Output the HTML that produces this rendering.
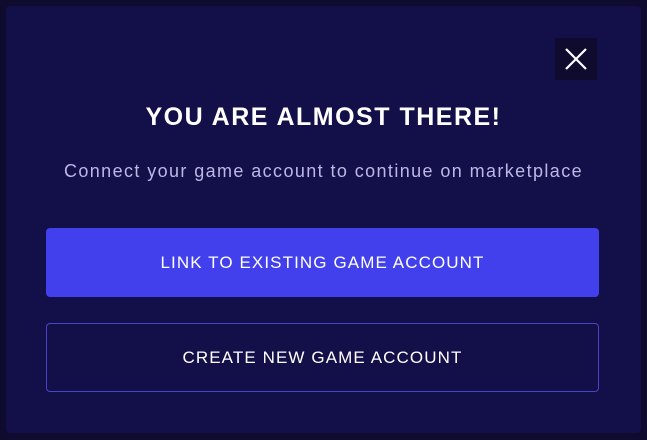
<!DOCTYPE html>
<html><head><style>
html,body{margin:0;padding:0;width:647px;height:440px;background:#0f0b2e;overflow:hidden;font-family:"Liberation Sans",sans-serif;}
.modal{position:absolute;left:6px;top:6px;width:635px;height:427px;background:#130f48;border-radius:4px;}
.close{position:absolute;left:555px;top:38px;width:42px;height:42px;background:#0e0b2f;}
.title{position:absolute;left:0;width:647px;top:103px;text-align:center;color:#fff;font-size:25px;font-weight:bold;letter-spacing:1.5px;}
.sub{position:absolute;left:0;width:647px;top:161px;text-align:center;color:#bcb8e6;font-size:18px;letter-spacing:1.4px;}
.btn{position:absolute;left:46px;width:553px;height:69px;box-sizing:border-box;border-radius:4px;color:#fff;font-size:17px;letter-spacing:1.1px;text-align:center;line-height:69px;}
.b1{top:228px;background:#4240ec;}
.b2{top:323px;border:1px solid #4a44c8;line-height:67px;}
</style></head><body>
<div class="modal"></div>
<div class="close"><svg width="42" height="42"><path d="M11 11L31 31M31 11L11 31" stroke="#fff" stroke-width="2.2"/></svg></div>
<div class="title">YOU ARE ALMOST THERE!</div>
<div class="sub">Connect your game account to continue on marketplace</div>
<div class="btn b1">LINK TO EXISTING GAME ACCOUNT</div>
<div class="btn b2">CREATE NEW GAME ACCOUNT</div>
</body></html>
